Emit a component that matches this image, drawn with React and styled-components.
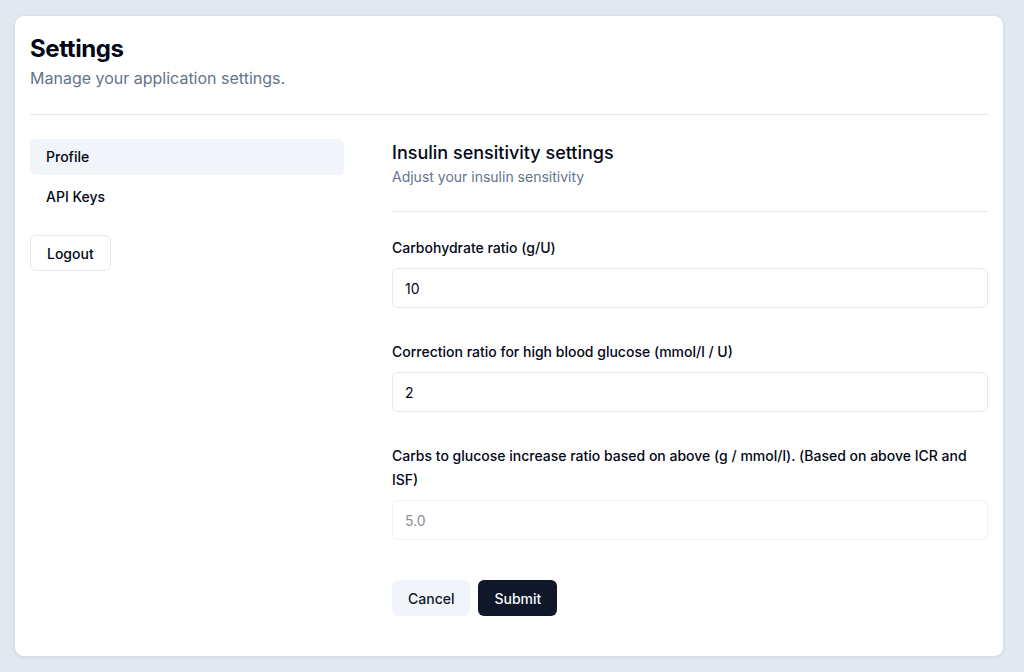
import React from "react";
import styled, { createGlobalStyle } from "styled-components";

const GlobalStyle = createGlobalStyle`
  * { box-sizing: border-box; }
  html, body {
    margin: 0;
    background: #e2e8f0;
    font-family: Inter, "Noto Sans", sans-serif;
    color: #020817;
  }
`;

const Page = styled.div`
  padding: 15px 20px 15px 14px;
`;

const Card = styled.div`
  background: #fff;
  border-radius: 10px;
  border: 1px solid #d9e0e8;
  box-shadow: 0 1px 3px rgba(15, 23, 42, 0.08);
  padding: 17px 15px 39px;
  height: 642px;
`;

const Title = styled.h1`
  margin: 0;
  font-size: 24px;
  line-height: 32px;
  font-weight: 700;
  letter-spacing: -0.4px;
`;

const Subtitle = styled.p`
  margin: 1px 0 0;
  font-size: 16px;
  line-height: 24px;
  color: #64748b;
`;

const Divider = styled.hr`
  border: none;
  border-top: 1px solid #e2e8f0;
  margin: 24px 0;
`;

const Layout = styled.div`
  display: flex;
  gap: 48px;
`;

const Sidebar = styled.nav`
  width: 314px;
  flex-shrink: 0;
  display: flex;
  flex-direction: column;
  gap: 4px;
`;

const NavItem = styled.a`
  display: block;
  height: 36px;
  line-height: 36px;
  padding: 0 16px;
  border-radius: 6px;
  font-size: 14px;
  font-weight: 500;
  color: #020817;
  background: ${(p) => (p.$active ? "#f1f5f9" : "transparent")};
  cursor: pointer;
`;

const Button = styled.button`
  height: 36px;
  padding: 0 15px;
  border-radius: 6px;
  font-family: inherit;
  font-size: 14px;
  font-weight: 500;
  cursor: pointer;
  border: 1px solid transparent;
  background: #f1f5f9;
  color: #0f172a;
`;

const OutlineButton = styled(Button)`
  align-self: flex-start;
  margin-top: 16px;
  padding: 0 16px;
  background: #fff;
  border-color: #e2e8f0;
  color: #020817;
`;

const PrimaryButton = styled(Button)`
  background: #0f172a;
  color: #f8fafc;
`;

const Main = styled.section`
  flex: 1;
`;

const SectionTitle = styled.h2`
  margin: 0;
  font-size: 18px;
  line-height: 28px;
  font-weight: 500;
`;

const SectionSub = styled.p`
  margin: 0;
  font-size: 14px;
  line-height: 20px;
  color: #64748b;
`;

const Form = styled.form`
  display: flex;
  flex-direction: column;
  gap: 32px;
`;

const Field = styled.div`
  display: flex;
  flex-direction: column;
  gap: 8px;
`;

const Label = styled.label`
  font-size: 14px;
  line-height: 24px;
  font-weight: 500;
`;

const Input = styled.input`
  height: 40px;
  width: 100%;
  padding: 0 12px;
  border: 1px solid #e2e8f0;
  border-radius: 6px;
  font-family: inherit;
  font-size: 14px;
  color: #020817;
  background: #fff;
  outline: none;

  &:disabled {
    color: #8a919b;
    border-color: #eef1f5;
  }
`;

const Actions = styled.div`
  display: flex;
  gap: 8px;
  margin-top: 8px;
`;

export default function App() {
  return (
    <Page>
      <GlobalStyle />
      <Card>
        <Title>Settings</Title>
        <Subtitle>Manage your application settings.</Subtitle>
        <Divider />
        <Layout>
          <Sidebar>
            <NavItem $active>Profile</NavItem>
            <NavItem>API Keys</NavItem>
            <OutlineButton type="button">Logout</OutlineButton>
          </Sidebar>
          <Main>
            <SectionTitle>Insulin sensitivity settings</SectionTitle>
            <SectionSub>Adjust your insulin sensitivity</SectionSub>
            <Divider />
            <Form onSubmit={(e) => e.preventDefault()}>
              <Field>
                <Label>Carbohydrate ratio (g/U)</Label>
                <Input defaultValue="10" />
              </Field>
              <Field>
                <Label>Correction ratio for high blood glucose (mmol/l / U)</Label>
                <Input defaultValue="2" />
              </Field>
              <Field>
                <Label>
                  Carbs to glucose increase ratio based on above (g / mmol/l). (Based on above ICR and ISF)
                </Label>
                <Input value="5.0" disabled readOnly />
              </Field>
              <Actions>
                <Button type="button">Cancel</Button>
                <PrimaryButton type="submit">Submit</PrimaryButton>
              </Actions>
            </Form>
          </Main>
        </Layout>
      </Card>
    </Page>
  );
}
